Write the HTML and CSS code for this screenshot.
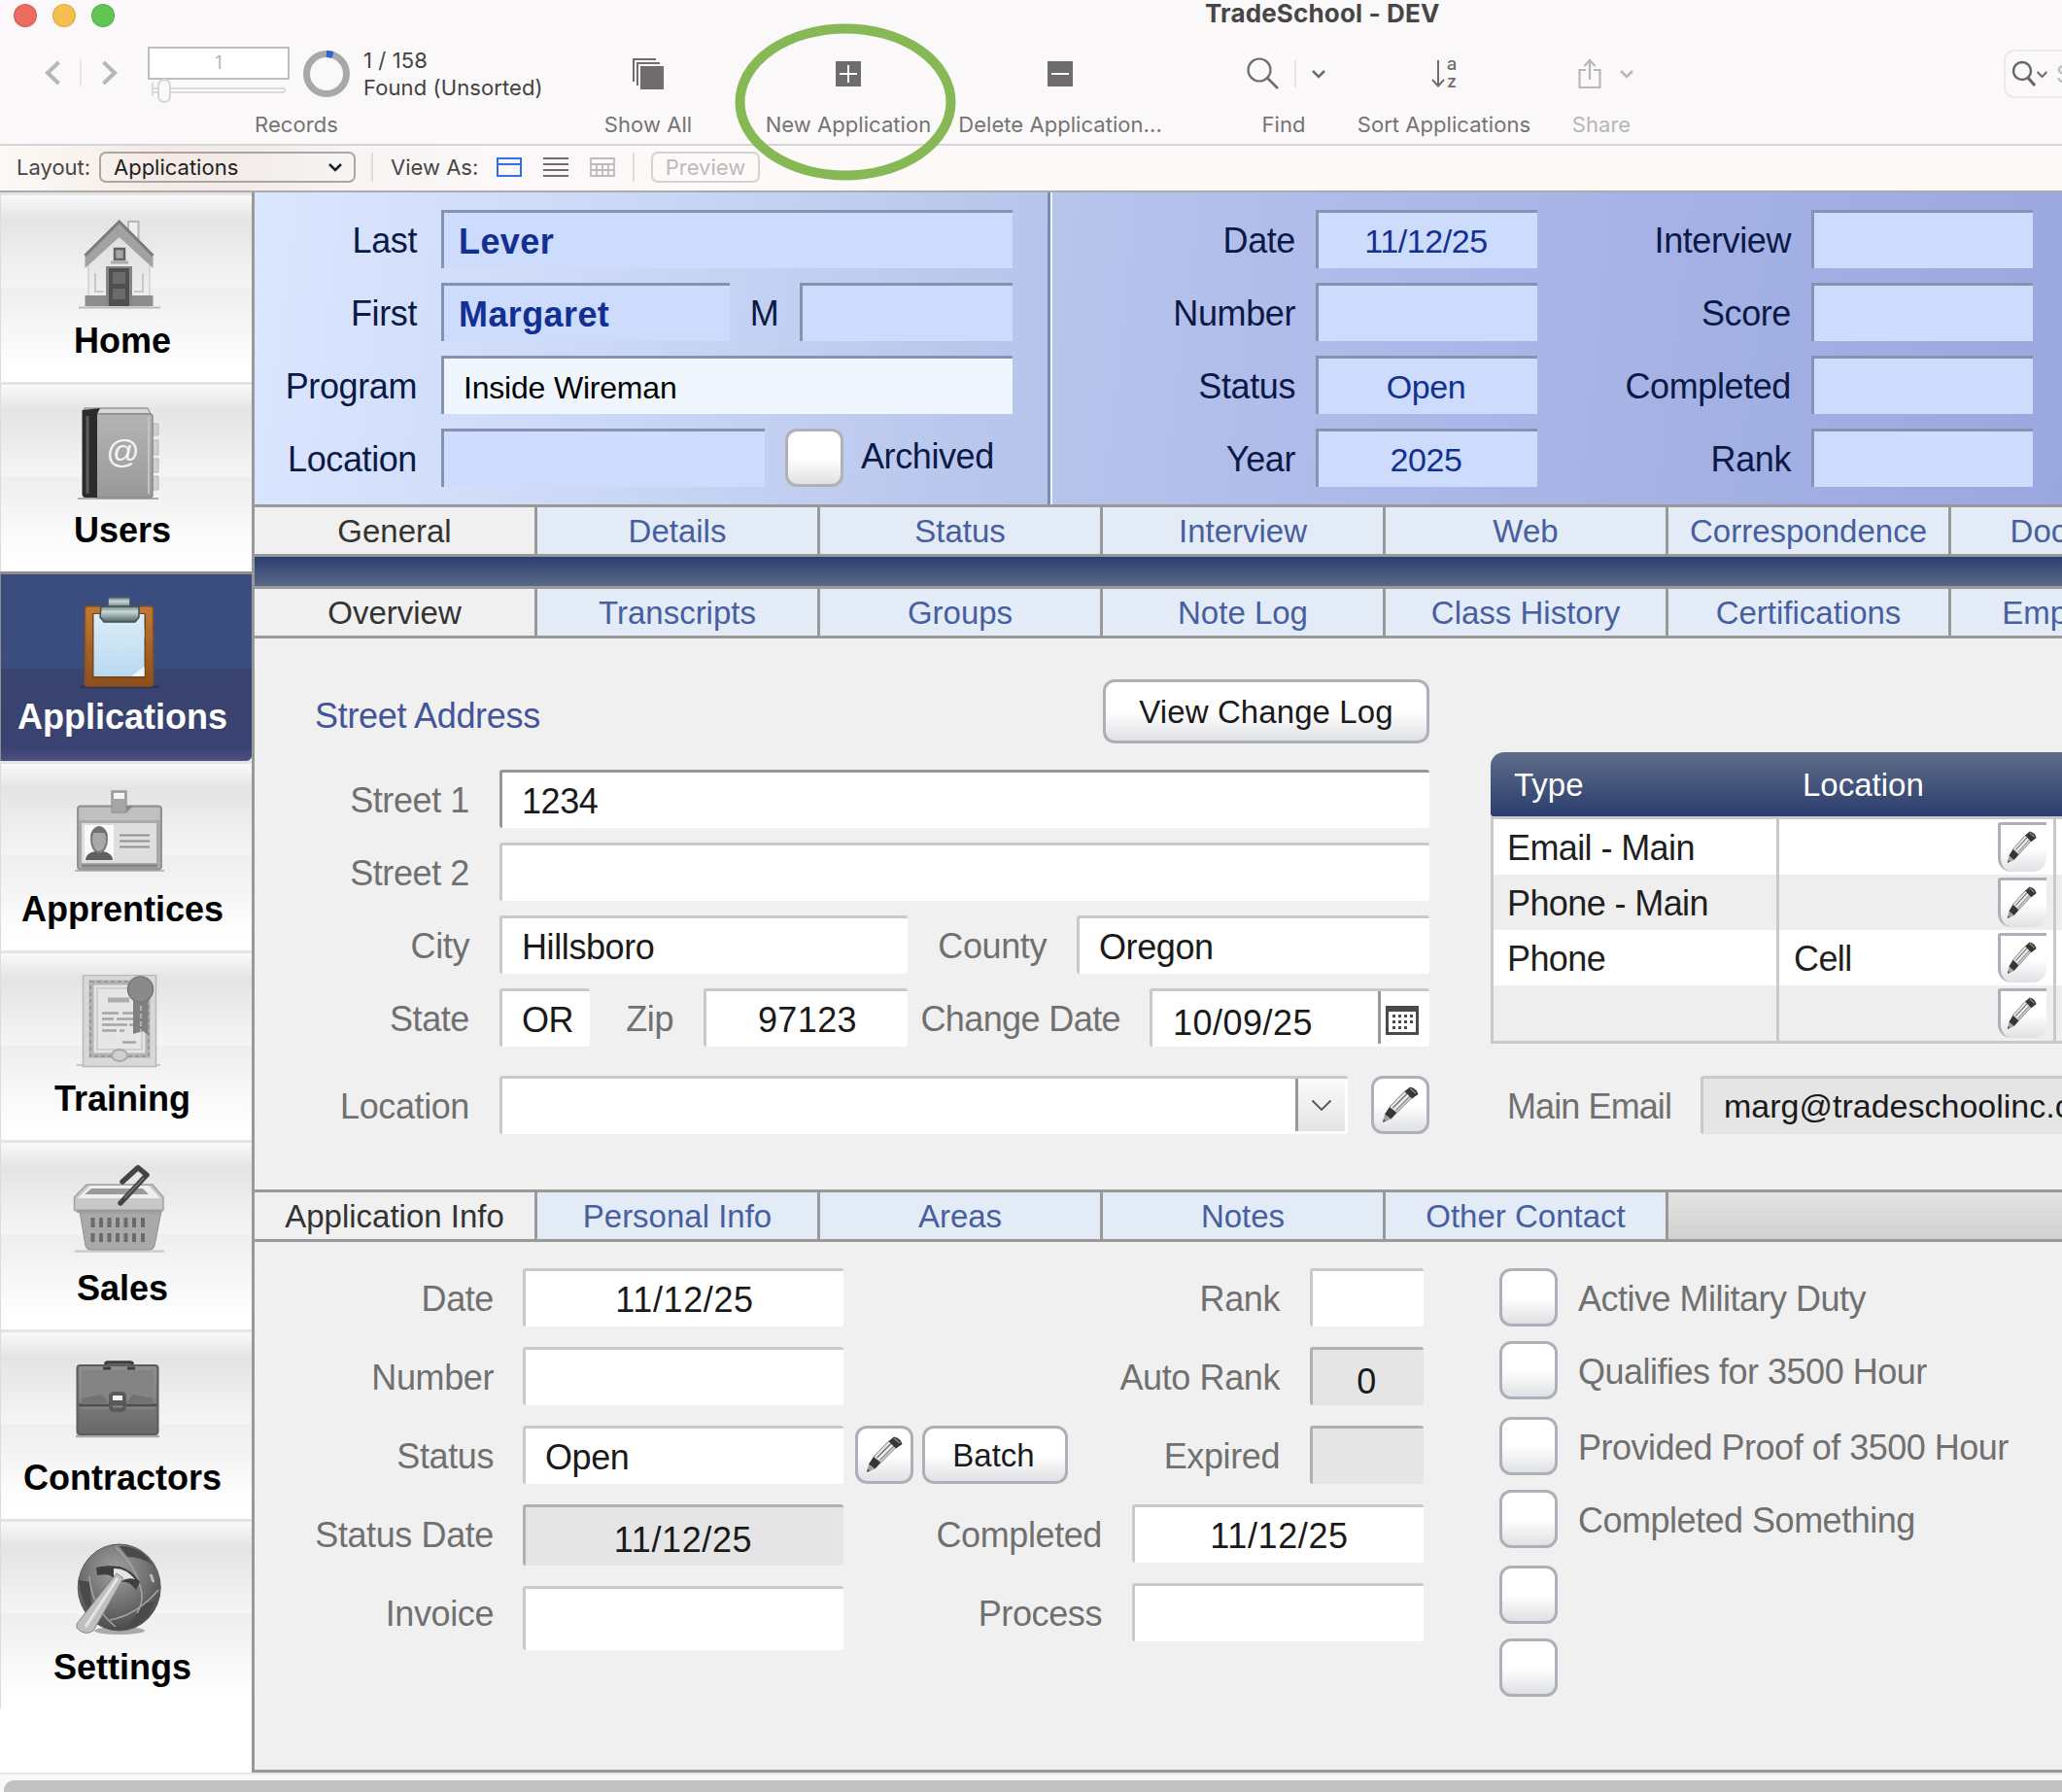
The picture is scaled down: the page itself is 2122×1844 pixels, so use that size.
FILE: index.html
```html
<!DOCTYPE html>
<html lang="en">
<head>
    <meta charset="UTF-8">
    <meta name="viewport" content="width=device-width, initial-scale=1.0">
    <title>TradeSchool - DEV</title>
    <link rel="stylesheet" href="styles.css">
</head>
<body>
    <!-- Shared symbols -->
    <svg class="symbols" width="0" height="0">
        <defs>
            <linearGradient id="gBody" x1="0" y1="0" x2="1" y2="1">
                <stop offset="0" stop-color="#b0b0b0"/><stop offset="0.5" stop-color="#f2f2f2"/><stop offset="1" stop-color="#7d7d7d"/>
            </linearGradient>
            <linearGradient id="gGrey" x1="0" y1="0" x2="0" y2="1">
                <stop offset="0" stop-color="#b4b4b4"/><stop offset="1" stop-color="#999"/>
            </linearGradient>
            <linearGradient id="gLight" x1="0" y1="0" x2="0" y2="1">
                <stop offset="0" stop-color="#dedede"/><stop offset="1" stop-color="#f2f2f2"/>
            </linearGradient>
            <linearGradient id="gCase" x1="0" y1="0" x2="0" y2="1">
                <stop offset="0" stop-color="#8d8d8d"/><stop offset="1" stop-color="#686868"/>
            </linearGradient>
            <linearGradient id="gWood" x1="0" y1="0" x2="0" y2="1">
                <stop offset="0" stop-color="#c07a35"/><stop offset="1" stop-color="#8a4f1c"/>
            </linearGradient>
            <linearGradient id="gPaper" x1="0" y1="0" x2="0" y2="1">
                <stop offset="0" stop-color="#dcedf8"/><stop offset="1" stop-color="#b9d9f1"/>
            </linearGradient>
            <linearGradient id="gClip" x1="0" y1="0" x2="0" y2="1">
                <stop offset="0" stop-color="#6d8484"/><stop offset="0.35" stop-color="#c9d8d6"/><stop offset="1" stop-color="#4d6464"/>
            </linearGradient>
            <radialGradient id="gGlobe" cx="0.45" cy="0.3" r="0.7">
                <stop offset="0" stop-color="#a0a0a0"/><stop offset="0.6" stop-color="#6e6e6e"/><stop offset="1" stop-color="#4a4a4a"/>
            </radialGradient>
        </defs>
        <symbol id="pencil" viewBox="0 0 38 38">
            <path d="M1 37 L3 28.500 L9.500 33.500 Z" fill="#a0a0a0"/>
            <path d="M1 37 L1.800 33.500 L4.500 35.600 Z" fill="#555"/>
            <path d="M3 28.500 L8 21 L15.500 27 L9.500 33.500 Z" fill="#363636"/>
            <path d="M8 21 L23.500 5 L31 11.500 L15.500 27 Z" fill="url(#gBody)" stroke="#7d7d7d" stroke-width="1"/>
            <path d="M11.500 22 L26 7.500" stroke="#6a6a6a" stroke-width="1.200"/>
            <path d="M14.500 24.500 L29 10" stroke="#8a8a8a" stroke-width="1.200"/>
            <path d="M23.500 5 L29 0.500 Q36 2 37.500 8 L31 12.500 Z" fill="#363636"/>
            <path d="M29 2 L35 7" stroke="#8c8c8c" stroke-width="1.500"/>
        </symbol>
        <symbol id="down" viewBox="0 0 16 10">
            <path d="M2 2 L8 8 L14 2" fill="none" stroke="currentColor" stroke-width="2.600"/>
        </symbol>
    </svg>

    <header class="window-bar">
        <div class="title-bar">
            <div class="lights">
                <span class="light red"></span>
                <span class="light yellow"></span>
                <span class="light green"></span>
            </div>
            <div class="window-title">TradeSchool - DEV</div>
        </div>
        <div class="toolbar">
            <div class="tool records">
                <div class="tool-icon records-controls">
                    <svg class="nav-arrow" width="18" height="28" viewBox="0 0 18 28"><path d="M15.500 3 L4 14 L15.500 25" fill="none" stroke="#b8b7b8" stroke-width="4"/></svg>
                    <span class="tool-sep"></span>
                    <svg class="nav-arrow next" width="18" height="28" viewBox="0 0 18 28"><path d="M2.500 3 L14 14 L2.500 25" fill="none" stroke="#b8b7b8" stroke-width="4"/></svg>
                    <div class="record-picker">
                        <div class="record-number">1</div>
                        <svg width="146" height="26" viewBox="0 0 146 26">
                            <path d="M5 4 V18" stroke="#dcdbdc" stroke-width="2"/>
                            <rect x="5" y="10" width="136" height="4" rx="2" fill="none" stroke="#dcdbdc" stroke-width="2"/>
                            <rect x="11" y="1" width="12" height="23" rx="6" fill="#faf8f9" stroke="#d6d5d6" stroke-width="2"/>
                        </svg>
                    </div>
                    <svg class="donut" width="48" height="48" viewBox="0 0 48 48">
                        <circle cx="24" cy="24" r="20.500" fill="none" stroke="#a8a8a8" stroke-width="7"/>
                        <path d="M24 3.500 A20.500 20.500 0 0 1 30.500 4.600" fill="none" stroke="#2c66d2" stroke-width="7"/>
                    </svg>
                    <div class="found">1 / 158<br>Found (Unsorted)</div>
                </div>
                <div class="tool-label">Records</div>
            </div>
            <div class="tool show-all">
                <div class="tool-icon">
                    <svg width="32" height="32" viewBox="0 0 32 32"><path d="M1 24 V1 H24" fill="none" stroke="#6e6c6d" stroke-width="2"/><path d="M5 28 V5 H28" fill="none" stroke="#6e6c6d" stroke-width="2"/><rect x="8" y="8" width="24" height="24" fill="#6e6c6d"/></svg>
                </div>
                <div class="tool-label">Show All</div>
            </div>
            <div class="tool new-app">
                <div class="tool-icon">
                    <svg width="26" height="26" viewBox="0 0 26 26"><rect width="26" height="26" fill="#6e6c6d"/><path d="M13 4 V22 M4 13 H22" stroke="#fff" stroke-width="2"/></svg>
                </div>
                <div class="tool-label">New Application</div>
            </div>
            <div class="tool delete-app">
                <div class="tool-icon">
                    <svg width="26" height="26" viewBox="0 0 26 26"><rect width="26" height="26" fill="#6e6c6d"/><path d="M4 13 H22" stroke="#fff" stroke-width="2"/></svg>
                </div>
                <div class="tool-label">Delete Application...</div>
            </div>
            <div class="tool find">
                <div class="tool-icon">
                    <svg width="34" height="34" viewBox="0 0 34 34"><circle cx="13" cy="13" r="11.500" fill="none" stroke="#6e6c6d" stroke-width="2.200"/><path d="M21 21 L32 32" stroke="#6e6c6d" stroke-width="2.600"/></svg>
                    <span class="tool-sep"></span>
                    <svg class="dark" width="16" height="10"><use href="#down"/></svg>
                </div>
                <div class="tool-label">Find</div>
            </div>
            <div class="tool sort">
                <div class="tool-icon">
                    <svg width="28" height="32" viewBox="0 0 28 32"><path d="M7 2 V28 M1 22 L7 28.500 L13 22" fill="none" stroke="#6e6c6d" stroke-width="2"/><text x="16" y="12" class="sort-letter">a</text><text x="16" y="30" class="sort-letter">z</text></svg>
                </div>
                <div class="tool-label">Sort Applications</div>
            </div>
            <div class="tool share">
                <div class="tool-icon">
                    <svg width="24" height="32" viewBox="0 0 24 32"><path d="M8 12 H1.500 V30 H22.500 V12 H16 M12 22 V2 M6.500 8 L12 2 L17.500 8" fill="none" stroke="#b8b6b7" stroke-width="2.200"/></svg>
                    <svg class="pale" width="16" height="10"><use href="#down"/></svg>
                </div>
                <div class="tool-label">Share</div>
            </div>
            <div class="search">
                <svg width="24" height="28" viewBox="0 0 24 28"><circle cx="10" cy="11" r="9" fill="none" stroke="#666465" stroke-width="2.400"/><path d="M16 18 L23 26" stroke="#666465" stroke-width="3"/></svg>
                <svg class="dark" width="13" height="9"><use href="#down"/></svg>
                <span>Search</span>
            </div>
        </div>
        <svg class="highlight" width="228" height="162" viewBox="0 0 228 162"><ellipse cx="114" cy="81" rx="108.500" ry="75.500" fill="none" stroke="#86b955" stroke-width="10"/></svg>
    </header>

    <div class="layout-bar">
        <span class="layout-label">Layout:</span>
        <div class="layout-select"><span>Applications</span><svg width="16" height="10"><use href="#down"/></svg></div>
        <span class="bar-sep"></span>
        <span class="view-label">View As:</span>
        <div class="view-icons">
            <svg width="26" height="20" viewBox="0 0 26 20"><path d="M1 1 H25 V19 H1 Z M1 7 H25" fill="none" stroke="#2f6fed" stroke-width="2"/></svg>
            <svg width="26" height="20" viewBox="0 0 26 20"><path d="M0 1 H26 M0 7 H26 M0 13 H26 M0 19 H26" stroke="#6e6c6d" stroke-width="2"/></svg>
            <svg width="26" height="20" viewBox="0 0 26 20"><path d="M1 1 H25 V19 H1 Z M1 7 H25 M1 13 H25 M7 7 V19 M13 7 V19 M19 7 V19" fill="none" stroke="#bcbabb" stroke-width="1.800"/></svg>
        </div>
        <span class="bar-sep second"></span>
        <div class="preview">Preview</div>
    </div>

    <div class="workspace">
        <nav class="sidebar">
            <a class="nav-item">
                <svg width="96" height="96" viewBox="0 0 96 96">
                    <path d="M6 93.500 H90" stroke="#bbb" stroke-width="2"/>
                    <path d="M57 5 H67.500 V30 L57 21 Z" fill="#eee" stroke="#b5b5b5" stroke-width="2"/>
                    <path d="M16 46 L47.700 18 L79 46 V92 H16 Z" fill="url(#gLight)" stroke="#c2c2c2"/>
                    <path d="M23 58 V77 H32 M72 58 V77 H63" fill="none" stroke="#c8c8c8" stroke-width="2"/>
                    <path d="M12.500 53 V39 L47.700 4 L82.500 39 V53 L47.700 21 Z" fill="#a2a2a2"/>
                    <path d="M12.500 40 L47.700 5 L82.500 40" fill="none" stroke="#7b7b7b" stroke-width="3"/>
                    <rect x="12.500" y="81" width="70" height="11" fill="#8d8d8d"/>
                    <rect x="43" y="33" width="10" height="11" fill="#a5a5a5" stroke="#626262" stroke-width="2.500"/>
                    <path d="M39 47 H57" stroke="#aaa" stroke-width="3"/>
                    <rect x="34" y="51" width="27" height="41" fill="#858585"/>
                    <rect x="37" y="53" width="21" height="39" fill="#4f4f4f"/>
                    <rect x="41" y="57" width="13" height="12" fill="#6b6b6b"/>
                    <rect x="41" y="74" width="13" height="11" fill="#6b6b6b"/>
                </svg>
                <span>Home</span>
            </a>
            <a class="nav-item">
                <svg width="96" height="96" viewBox="0 0 96 96">
                    <path d="M5 95 H88" stroke="#aaa" stroke-width="2"/>
                    <path d="M82 18 H88 V30 H82 Z M82 35 H88 V50 H82 Z M82 54 H88 V68 H82 Z M82 72 H88 V86 H82 Z" fill="#cfcfcf" stroke="#b5b5b5"/>
                    <path d="M12 2 H77 L80 8 H12 Z" fill="#d8d8d8" stroke="#777"/>
                    <rect x="22" y="8" width="60" height="86" rx="3" fill="url(#gGrey)" stroke="#8a8a8a" stroke-width="1.500"/>
                    <path d="M78 11 V90" stroke="#c4c4c4" stroke-width="2"/>
                    <path d="M9.500 4 L28 2 L25 8 V94 H13 Q9.500 94 9.500 90 Z" fill="#2b2b2b"/>
                    <path d="M15 10 V90" stroke="#5d5d5d" stroke-width="3"/>
                    <text x="51.500" y="58" class="book-at">@</text>
                </svg>
                <span>Users</span>
            </a>
            <a class="nav-item active">
                <svg width="96" height="96" viewBox="0 0 96 96">
                    <path d="M7 94 H89" stroke="#2c3558" stroke-width="2.500"/>
                    <rect x="12.500" y="11" width="70" height="82" rx="3" fill="url(#gWood)" stroke="#8a501f" stroke-width="1.500"/>
                    <rect x="20" y="18" width="55" height="67" fill="#7c4416"/>
                    <rect x="21.500" y="19" width="52" height="64" fill="url(#gPaper)"/>
                    <path d="M73.500 34 L42 59 L73.500 43 Z" fill="#cfe5f5"/>
                    <path d="M73.500 73 L60 83 H73.500 Z" fill="#edf8fd"/>
                    <rect x="36.500" y="2" width="22" height="11" rx="1.500" fill="url(#gClip)" stroke="#4f6869"/>
                    <path d="M29 11 H68 V22 L64 27 H32 L28 22 Z" fill="url(#gClip)" stroke="#3c5051" stroke-width="1.500"/>
                </svg>
                <span>Applications</span>
            </a>
            <a class="nav-item">
                <svg width="96" height="96" viewBox="0 0 96 96">
                    <path d="M2 88 H94" stroke="#bbb" stroke-width="2"/>
                    <rect x="5" y="21.500" width="86" height="65" rx="3" fill="#a9a9a9" stroke="#929292" stroke-width="2"/>
                    <rect x="6.500" y="23" width="83" height="13" fill="#c0c0c0"/>
                    <rect x="9" y="39" width="77" height="41" fill="#dedede"/>
                    <path d="M9 83 H87" stroke="#858585" stroke-width="3"/>
                    <rect x="12" y="41" width="30" height="36" fill="#fafafa"/>
                    <path d="M13 77 Q13 70 23 68 H31 Q41 70 41 77 Z" fill="#606060"/>
                    <ellipse cx="27" cy="56" rx="8" ry="13" fill="#a8a8a8" stroke="#787878" stroke-width="2"/>
                    <path d="M18 53 Q19 43 27 43 Q35 43 36 53 L33 49 H21 Z" fill="#707070"/>
                    <path d="M48 51.500 H79 M48 57.500 H79 M48 63.500 H79" stroke="#8f8f8f" stroke-width="2"/>
                    <path d="M40 6 H55 V28 H40 Z" fill="#a5a5a5" stroke="#999" stroke-width="1.500"/>
                    <rect x="42" y="8" width="11" height="6" fill="#f5f5f5"/>
                    <path d="M55 21 H63 L55 28 Z" fill="#888"/>
                </svg>
                <span>Apprentices</span>
            </a>
            <a class="nav-item">
                <svg width="96" height="96" viewBox="0 0 96 96">
                    <path d="M4 93 H90" stroke="#c5c5c5" stroke-width="2"/>
                    <rect x="10.500" y="0.500" width="75" height="94" fill="#d8d8d8" stroke="#b9b9b9" stroke-width="1.500"/>
                    <rect x="19" y="8" width="58" height="75" fill="#e4e4e4" stroke="#b4b4b4" stroke-width="5"/>
                    <rect x="18" y="7" width="60" height="77" fill="none" stroke="#989898" stroke-width="2" stroke-dasharray="4 3"/>
                    <rect x="25" y="14" width="46" height="63" fill="#e6e6e6" stroke="#cfcfcf" stroke-width="2"/>
                    <path d="M36 26 H58" stroke="#adadad" stroke-width="5"/>
                    <path d="M30 39.500 H47 M51 39.500 H62 M30 45.500 H42 M45 45.500 H63 M30 51.500 H56 M58 51.500 H62 M30 57.500 H45 M48 57.500 H53 M51 69.500 H65" stroke="#a5a5a5" stroke-width="2.500"/>
                    <ellipse cx="48" cy="83" rx="8" ry="6" fill="#d0d0d0" stroke="#a9a9a9" stroke-width="2"/>
                    <path d="M62 27 H77.500 V62 L72 58 L62 61 Z" fill="#808080"/>
                    <path d="M70 32 V58" stroke="#b1b1b1" stroke-width="2" stroke-dasharray="5 3"/>
                    <circle cx="69.500" cy="15" r="13" fill="#8a8a8a" stroke="#757575" stroke-width="1.500"/>
                </svg>
                <span>Training</span>
            </a>
            <a class="nav-item">
                <svg width="96" height="96" viewBox="0 0 96 96">
                    <path d="M2 89.500 H94" stroke="#ccc" stroke-width="2.500"/>
                    <path d="M7 48 H91 L84 84 Q83 88 79 88 H18 Q14 88 13 84 Z" fill="#a9a9a9" stroke="#8d8d8d"/>
                    <path d="M14 21 H82 L93 34 V47 L89 50 H7 L1.500 47 V34 Z" fill="#c8c8c8" stroke="#a0a0a0" stroke-width="1.500"/>
                    <path d="M18 22 H78 L90 35 H5 Z" fill="#f0f0f0"/>
                    <path d="M19 25 H72 L78 31 H12 Z" fill="#9b9b9b"/>
                    <path d="M4 48 H91" stroke="#9b9b9b" stroke-width="3"/>
                    <path d="M20.500 55 V65 M29 55 V65 M37.500 55 V65 M46 55 V65 M54.500 55 V65 M63 55 V65 M72 55 V65 M20.500 71 V80 M29 71 V80 M37.500 71 V80 M46 71 V80 M54.500 71 V80 M63 71 V80 M72 71 V80" stroke="#6b6b6b" stroke-width="4"/>
                    <path d="M51 18 L67 3.500 L76 11 L49 40" fill="none" stroke="#444" stroke-width="5.500" stroke-linejoin="round" stroke-linecap="round"/>
                    <path d="M53 35 L73 14" stroke="#777" stroke-width="1.500"/>
                </svg>
                <span>Sales</span>
            </a>
            <a class="nav-item">
                <svg width="96" height="96" viewBox="0 0 96 96">
                    <path d="M3 85 H89" stroke="#aaa" stroke-width="2.500"/>
                    <path d="M34 16 V10 Q34 9 36 9 H59 Q61 9 61 10 V16" fill="none" stroke="#3c3c3c" stroke-width="3.500"/>
                    <rect x="4.500" y="12" width="83" height="71" rx="3" fill="url(#gCase)" stroke="#5c5c5c" stroke-width="2"/>
                    <path d="M8 16 H84 V48 Q84 51 78 51 H14 Q8 51 8 48 Z" fill="#848484" stroke="#949494"/>
                    <path d="M8 46 L30 42 L37 51 H10 Z M84 46 L62 42 L55 51 H82 Z" fill="#727272"/>
                    <path d="M6 53 H86" stroke="#4e4e4e" stroke-width="2.500"/>
                    <path d="M8 56 H84" stroke="#8a8a8a" stroke-width="1.500"/>
                    <path d="M31 15 H39 M56 15 H64" stroke="#3c3c3c" stroke-width="3"/>
                    <rect x="37" y="39" width="18" height="21" rx="5" fill="#595959"/>
                    <rect x="41" y="43" width="10" height="5" fill="#f2f2f2"/>
                    <path d="M41 54.500 H51" stroke="#8a8a8a" stroke-width="2"/>
                </svg>
                <span>Contractors</span>
            </a>
            <a class="nav-item">
                <svg width="96" height="96" viewBox="0 0 96 96">
                    <ellipse cx="48" cy="90" rx="26" ry="4" fill="#aaa"/>
                    <ellipse cx="47.700" cy="45.500" rx="42.500" ry="44.500" fill="url(#gGlobe)" stroke="#5a5a5a"/>
                    <path d="M48 3 Q70 2 82 22 Q70 14 56 14 Z M84 60 Q74 84 54 88 Q66 76 70 62 Z M6 38 Q8 60 20 74 Q18 52 18 40 Z" fill="#4a4a4a"/>
                    <path d="M44 4 Q66 24 71 52 Q72 62 66 72 M88 48 Q66 74 38 79 M17 34 Q19 66 44 86" fill="none" stroke="#a6a6a6" stroke-width="1.500"/>
                    <path d="M24 25 Q34 22 48 24 Q60 27 69 40 L65 48 Q58 38 50 40 L43 38 Q40 30 25 33 Z" fill="#3f3f3f"/>
                    <path d="M42 26 Q54 25 64 37 Q56 35 50 39 L42 36 Z" fill="#e5e5e5"/>
                    <path d="M45 31 L52 36 L21 90 Q12 96 4 87 L4 83 Z" fill="#c0c0c0" stroke="#858585" stroke-width="1"/>
                    <path d="M46 36 L13 86" stroke="#e5e5e5" stroke-width="3"/>
                    <path d="M80 32 L83 40" stroke="#bbb" stroke-width="3"/>
                </svg>
                <span>Settings</span>
            </a>
        </nav>

        <main class="main">
            <!-- Record header -->
            <section class="record-head">
                <div class="person">
                    <div class="row">
                        <label>Last</label>
                        <div class="field name">Lever</div>
                    </div>
                    <div class="row">
                        <label>First</label>
                        <div class="field name first-name">Margaret</div>
                        <label class="middle">M</label>
                        <div class="field"></div>
                    </div>
                    <div class="row">
                        <label>Program</label>
                        <div class="field program">Inside Wireman</div>
                    </div>
                    <div class="row">
                        <label>Location</label>
                        <div class="field location"></div>
                        <span class="check"></span>
                        <label class="archived">Archived</label>
                    </div>
                </div>
                <div class="summary">
                    <div class="row"><label>Date</label><div class="field">11/12/25</div><label class="wide">Interview</label><div class="field"></div></div>
                    <div class="row"><label>Number</label><div class="field"></div><label class="wide">Score</label><div class="field"></div></div>
                    <div class="row"><label>Status</label><div class="field">Open</div><label class="wide">Completed</label><div class="field"></div></div>
                    <div class="row"><label>Year</label><div class="field">2025</div><label class="wide">Rank</label><div class="field"></div></div>
                </div>
            </section>

            <div class="tabs">
                <a class="tab current">General</a>
                <a class="tab">Details</a>
                <a class="tab">Status</a>
                <a class="tab">Interview</a>
                <a class="tab">Web</a>
                <a class="tab">Correspondence</a>
                <a class="tab">Documents</a>
            </div>
            <div class="navy-bar"></div>
            <div class="tabs">
                <a class="tab current">Overview</a>
                <a class="tab">Transcripts</a>
                <a class="tab">Groups</a>
                <a class="tab">Note Log</a>
                <a class="tab">Class History</a>
                <a class="tab">Certifications</a>
                <a class="tab">Employment</a>
            </div>

            <!-- Overview -->
            <section class="overview">
                <div class="address">
                    <div class="address-head">
                        <h2>Street Address</h2>
                        <button class="button log-button">View Change Log</button>
                    </div>
                    <div class="row"><label>Street 1</label><div class="field strong">1234</div></div>
                    <div class="row"><label>Street 2</label><div class="field"></div></div>
                    <div class="row">
                        <label>City</label><div class="field city">Hillsboro</div>
                        <label class="county-label">County</label><div class="field">Oregon</div>
                    </div>
                    <div class="row">
                        <label>State</label><div class="field state">OR</div>
                        <label class="zip-label">Zip</label><div class="field zip">97123</div>
                        <label class="change-label">Change Date</label>
                        <div class="field date">
                            <span>10/09/25</span>
                            <div class="date-button">
                                <svg width="34" height="30" viewBox="0 0 34 30"><rect x="1.500" y="1.500" width="31" height="27" fill="#fff" stroke="#4a4a4a" stroke-width="3"/><rect width="34" height="6" fill="#4a4a4a"/><path d="M7 10.500 H29 M7 16.500 H29 M7 22.500 H24" stroke="#4a4a4a" stroke-width="3" stroke-dasharray="3 3"/></svg>
                            </div>
                        </div>
                    </div>
                    <div class="row location-row">
                        <label>Location</label>
                        <div class="field location">
                            <div class="drop-button"><svg width="22" height="13" viewBox="0 0 22 13"><path d="M1.500 1.500 L11 11 L20.500 1.500" fill="none" stroke="#555" stroke-width="1.800"/></svg></div>
                        </div>
                        <button class="button pencil-button"><svg width="38" height="38"><use href="#pencil"/></svg></button>
                    </div>
                </div>

                <div class="contacts">
                    <div class="contacts-head"><span>Type</span><span>Location</span></div>
                    <div class="contacts-body">
                        <div class="contact-row"><div class="type">Email - Main</div><div class="place"><span></span><i class="edit"><svg width="31" height="34" viewBox="0 0 38 38" preserveAspectRatio="none"><use href="#pencil" width="38" height="38"/></svg></i></div><div class="rest"></div></div>
                        <div class="contact-row"><div class="type">Phone - Main</div><div class="place"><span></span><i class="edit"><svg width="31" height="34" viewBox="0 0 38 38" preserveAspectRatio="none"><use href="#pencil" width="38" height="38"/></svg></i></div><div class="rest"></div></div>
                        <div class="contact-row"><div class="type">Phone</div><div class="place"><span>Cell</span><i class="edit"><svg width="31" height="34" viewBox="0 0 38 38" preserveAspectRatio="none"><use href="#pencil" width="38" height="38"/></svg></i></div><div class="rest"></div></div>
                        <div class="contact-row"><div class="type"></div><div class="place"><span></span><i class="edit"><svg width="31" height="34" viewBox="0 0 38 38" preserveAspectRatio="none"><use href="#pencil" width="38" height="38"/></svg></i></div><div class="rest"></div></div>
                    </div>
                    <div class="row email-row">
                        <label>Main Email</label>
                        <div class="field email">marg@tradeschoolinc.com</div>
                    </div>
                </div>
            </section>

            <div class="tabs lower">
                <a class="tab current">Application Info</a>
                <a class="tab">Personal Info</a>
                <a class="tab">Areas</a>
                <a class="tab">Notes</a>
                <a class="tab">Other Contact</a>
            </div>

            <!-- Application info -->
            <section class="info">
                <div class="info-col left">
                    <div class="row"><label>Date</label><div class="field center">11/12/25</div></div>
                    <div class="row"><label>Number</label><div class="field"></div></div>
                    <div class="row">
                        <label>Status</label><div class="field">Open</div>
                        <button class="button pencil-button"><svg width="38" height="38"><use href="#pencil"/></svg></button>
                        <button class="button batch">Batch</button>
                    </div>
                    <div class="row"><label>Status Date</label><div class="field center locked tall">11/12/25</div></div>
                    <div class="row"><label>Invoice</label><div class="field invoice"></div></div>
                </div>
                <div class="info-col middle-col">
                    <div class="row"><label>Rank</label><div class="field small"></div></div>
                    <div class="row"><label>Auto Rank</label><div class="field small center locked">0</div></div>
                    <div class="row"><label>Expired</label><div class="field small locked"></div></div>
                    <div class="row"><label>Completed</label><div class="field center">11/12/25</div></div>
                    <div class="row"><label>Process</label><div class="field"></div></div>
                </div>
                <div class="checks">
                    <div class="check-row"><span class="check"></span><label>Active Military Duty</label></div>
                    <div class="check-row"><span class="check"></span><label>Qualifies for 3500 Hour</label></div>
                    <div class="check-row"><span class="check"></span><label>Provided Proof of 3500 Hour</label></div>
                    <div class="check-row"><span class="check"></span><label>Completed Something</label></div>
                    <div class="check-row"><span class="check"></span></div>
                    <div class="check-row"><span class="check"></span></div>
                </div>
            </section>
        </main>
    </div>

    <div class="scroll-track"><div class="scroll-thumb"></div></div>
</body>
</html>
```

FILE: styles.css
```css
:root {
    --line: #999999;
    --field-line: #c9c9c9;
    --panel: #f0f0f0;
    --label: #707070;
    --tab-blue: #475f9f;
}

* {
    margin: 0;
    padding: 0;
    box-sizing: border-box;
}

html {
    overflow: hidden;
}

body {
    width: 100%;
    height: 1844px;
    overflow: hidden;
    background: white;
    font-family: 'Liberation Sans', Arial, sans-serif;
    display: flex;
    flex-direction: column;
}

svg {
    display: block;
    flex: none;
}

.symbols {
    position: absolute;
}

/* Window bar and toolbar */
.window-bar {
    position: relative;
    height: 150px;
    background: #faf8f9;
    border-bottom: 2px solid #d6d4d5;
    font-family: Inter, sans-serif;
}

.title-bar {
    height: 34px;
    display: flex;
}

.lights {
    display: flex;
    gap: 16px;
    padding: 4px 0 0 14px;
    width: 1240px;
}

.light {
    width: 24px;
    height: 24px;
    border-radius: 50%;
    border: 1px solid rgba(0, 0, 0, 0.12);
}

.light.red { background: #ec6a5e; }
.light.yellow { background: #f4bf4f; }
.light.green { background: #61c554; }

.window-title {
    font-size: 26px;
    font-weight: 700;
    line-height: 28px;
    letter-spacing: 0.15px;
    color: #474647;
}

.toolbar {
    display: flex;
    height: 114px;
}

.tool {
    flex: none;
    display: flex;
    flex-direction: column;
    align-items: center;
}

.tool-icon {
    height: 82px;
    padding-top: 1px;
    display: flex;
    align-items: center;
    justify-content: center;
}

.tool-label {
    font-size: 22px;
    line-height: 24px;
    letter-spacing: 0.05px;
    color: #757374;
    white-space: nowrap;
}

.tool-sep {
    flex: none;
    width: 2px;
    height: 28px;
    background: #e7e5e6;
}

.records { width: 610px; }
.show-all { width: 114px; }
.new-app { width: 188px; margin-left: 55px; }
.delete-app { width: 220px; margin-left: 14px; }
.find { width: 84px; margin-left: 78px; }
.sort { width: 190px; margin-left: 28px; }
.share { width: 70px; margin-left: 32px; color: #b8b6b7; }
.share .tool-label { color: #b8b6b7; }
.share .tool-icon { align-self: flex-end; gap: 18px; width: 60px; }
.find .tool-icon { width: 84px; gap: 15px; padding-left: 6px; }
.sort .tool-icon { padding-left: 2px; }
.dark { color: #6e6c6d; }
.pale { color: #b8b6b7; }

.records-controls {
    width: 610px;
    justify-content: flex-start;
    padding-top: 0;
    padding-left: 45px;
}

.nav-arrow + .tool-sep { margin-left: 19px; }
.nav-arrow.next { margin-left: 20px; }

.record-picker {
    margin: 5px 0 0 30px;
    width: 146px;
}

.record-number {
    height: 34px;
    border: 2px solid #bfbebf;
    background: white;
    color: #b5b4b5;
    font-size: 18px;
    line-height: 30px;
    text-align: center;
}

.record-picker svg {
    margin-top: -1px;
}

.donut {
    margin: 2px 14px 0 14px;
}

.found {
    font-size: 22px;
    line-height: 28px;
    letter-spacing: 0.1px;
    color: #444344;
    white-space: nowrap;
    margin-top: 2px;
}

.sort-letter {
    font-family: Inter, sans-serif;
    font-size: 18px;
    font-weight: 500;
    fill: #6e6c6d;
}

.search {
    flex: none;
    width: 300px;
    height: 50px;
    margin: 17px 0 0 379px;
    border: 2px solid #ebe9ea;
    border-radius: 11px;
    display: flex;
    align-items: center;
    padding-left: 7px;
    font-size: 24px;
    color: #bcbabb;
}

.search span {
    margin-left: 8px;
}

.highlight {
    position: absolute;
    left: 756px;
    top: 24px;
    z-index: 2;
}

/* Layout bar */
.layout-bar {
    height: 48px;
    border-bottom: 2px solid #ababab;
    background: linear-gradient(90deg, #fcf9f6 0, #f9f2ed 90px, #f4e9e5 170px, #f3ecea 260px, #f6f5f4 360px, #fbf8f7 500px, #fdf9f8 700px);
    display: flex;
    align-items: center;
    padding: 0 0 2px 17px;
    font-family: Inter, sans-serif;
    font-size: 22px;
    color: #474647;
}

.layout-label { width: 85px; }

.layout-select {
    width: 264px;
    height: 32px;
    border: 2px solid #a9a6a6;
    border-radius: 7px;
    display: flex;
    align-items: center;
    justify-content: space-between;
    padding: 0 11px 0 13px;
    color: #222;
}

.bar-sep {
    width: 2px;
    height: 30px;
    background: #dfdcdc;
    margin-left: 16px;
}

.view-label {
    width: 108px;
    margin-left: 18px;
}

.view-icons {
    display: flex;
    gap: 22px;
    margin-left: 1px;
}

.bar-sep.second { margin-left: 18px; }

.preview {
    width: 112px;
    height: 32px;
    margin-left: 17px;
    border: 2px solid #d5d2d2;
    border-radius: 7px;
    color: #bcbaba;
    line-height: 28px;
    text-align: center;
}

/* Sidebar */
.workspace {
    display: flex;
    height: 1626px;
}

.sidebar {
    flex: none;
    width: 259px;
}

.nav-item {
    height: 195px;
    display: flex;
    flex-direction: column;
    align-items: center;
    border-top: 3px solid #e4e4e4;
    border-left: 1px solid #dcdcdc;
    background: linear-gradient(#f9f9f9 0, #e4e4e4 26px, #f5f5f5 94px, #eeeeee 95px, #ffffff 180px);
    color: black;
    font-size: 36px;
    font-weight: bold;
}

.nav-item svg {
    margin: 22px 0 0 74px;
    align-self: flex-start;
}

.nav-item span {
    margin-left: -8px;
    line-height: 40px;
    margin-top: 12px;
}

.nav-item.active {
    border-color: #8f8f8f;
    background: linear-gradient(#3b4c7f 0, #3b4e80 96px, #3a4470 97px, #394270 178px, #4c5083 192px);
    border-radius: 0 0 5px 0;
    color: white;
}

.nav-item.active span { margin-top: 9px; }

.book-at {
    font-family: 'Liberation Sans', sans-serif;
    font-size: 34px;
    font-weight: normal;
    text-anchor: middle;
    fill: #f4f4f4;
}

/* Shared form parts */
.main {
    flex: 1;
    min-width: 0;
    border-left: 3px solid var(--line);
    border-bottom: 3px solid var(--line);
    background: var(--panel);
    overflow: hidden;
}

.row {
    display: flex;
    height: 60px;
}

label {
    flex: none;
    height: 60px;
    padding-top: 3px;
    line-height: 57px;
    font-size: 36px;
    letter-spacing: -0.4px;
    text-align: right;
    white-space: nowrap;
    color: var(--label);
}

.field {
    flex: 1;
    height: 60px;
    padding: 3px 20px 0;
    border-top: 3px solid var(--field-line);
    border-left: 3px solid var(--field-line);
    border-radius: 3px;
    background: white;
    color: #1a1a1a;
    font-size: 36px;
    line-height: 54px;
    letter-spacing: -0.4px;
    white-space: nowrap;
}

.center {
    padding: 3px 0 0;
    text-align: center;
    letter-spacing: 0.6px;
}

.check,
.button {
    flex: none;
    height: 60px;
    border: 3px solid #adb0b8;
    border-radius: 12px;
    background: linear-gradient(#ffffff 50%, #e0e1e4 100%);
}

.check {
    width: 60px;
}

.button {
    font-family: inherit;
    font-size: 33px;
    color: #1a1a1a;
}

.pencil-button {
    width: 60px;
    display: flex;
    align-items: center;
    justify-content: center;
}

/* Record header */
.record-head {
    height: 324px;
    display: flex;
    border-bottom: 3px solid var(--line);
    background: linear-gradient(97deg, #dbe6ff 0%, #d0dcf8 15%, #b8c5ec 42%, #a9b5e7 70%, #9aa8df 100%);
}

.record-head .row {
    margin-bottom: 15px;
}

.record-head label {
    color: #0b1947;
}

.record-head .field {
    border-color: #8593b3;
    border-radius: 0;
    background: #cddbfd;
    color: #123092;
}

.person {
    width: 821px;
    flex: none;
    padding: 18px 36px 0 0;
    border-right: 2px solid #f0f3fd;
    box-shadow: inset -3px 0 0 #7d89b8;
}

.person label {
    width: 167px;
    margin-right: 25px;
}

.person .row { width: 780px; }

.record-head .field.name {
    font-weight: bold;
    padding: 3px 0 0 15px;
    letter-spacing: 0.4px;
}

.person .first-name {
    flex: none;
    width: 297px;
}

.person .middle {
    width: 71px;
    margin: 0 1px 0 0;
    text-align: center;
}

.record-head .program {
    background: #eff6fe;
    color: #000;
    font-size: 32px;
    letter-spacing: -0.2px;
    padding: 3px 0 0 20px;
}

.person .location {
    flex: none;
    width: 333px;
    margin-right: 21px;
}

.person .archived {
    width: auto;
    margin: -3px 0 0 18px;
}

.person .check {
    border-color: #b0b2b6;
}

.summary {
    padding-top: 18px;
}

.summary label {
    width: 250px;
    margin-right: 21px;
}

.summary .wide { width: 261px; }

.summary .field {
    flex: none;
    width: 228px;
    padding: 2px 4px 0 0;
    font-size: 34px;
    text-align: center;
}

/* Tabs */
.tabs {
    display: flex;
    height: 51px;
    border-bottom: 3px solid var(--line);
    background: linear-gradient(#e3e3e3, #d1d1d1);
}

.tab {
    flex: none;
    width: 291px;
    border-right: 3px solid var(--line);
    background: #e3ebf7;
    color: var(--tab-blue);
    font-size: 33px;
    line-height: 47px;
    padding-top: 1px;
    text-align: center;
}

.tab.current {
    background: var(--panel);
    color: #333;
}

.tabs.lower {
    height: 54px;
    border-top: 3px solid var(--line);
}

.navy-bar {
    height: 33px;
    border-bottom: 3px solid var(--line);
    background: linear-gradient(#2b4070, #5b6988);
}

/* Overview panel */
.overview {
    height: 567px;
    display: flex;
    padding-top: 42px;
}

.address {
    flex: none;
    width: 1209px;
}

.address-head {
    display: flex;
    justify-content: space-between;
    height: 93px;
    padding-left: 62px;
}

.address-head h2 {
    font-size: 36px;
    font-weight: normal;
    letter-spacing: -0.3px;
    line-height: 76px;
    color: #43559a;
}

.log-button {
    width: 336px;
    height: 66px;
    padding-top: 1px;
    letter-spacing: 0.1px;
}

.address .row {
    margin-bottom: 15px;
}

.address label {
    width: 221px;
    margin-right: 31px;
}

.field.strong { border-color: #979797; }
.address .city { flex: none; width: 420px; }
.address .county-label { width: 143px; }
.address .state { flex: none; width: 93px; }
.address .zip-label { width: 86px; }

.address .zip {
    flex: none;
    width: 210px;
    padding: 3px 0 0 1px;
    text-align: center;
    letter-spacing: 0.4px;
}

.address .change-label {
    width: 219px;
    margin-right: 30px;
    letter-spacing: -0.6px;
}

.address .date {
    display: flex;
    justify-content: space-between;
    padding-right: 0;
    padding-left: 21px;
    letter-spacing: 0.5px;
}

.date span {
    padding-top: 3px;
}

.date-button {
    width: 53px;
    height: 54px;
    margin-top: -3px;
    border-left: 3px solid var(--line);
    padding: 15px 0 0 5px;
}

.address .location-row {
    margin-top: 30px;
}

.address .location {
    padding: 0 3px 3px 0;
    margin-right: 24px;
    display: flex;
    justify-content: flex-end;
}

.drop-button {
    width: 51px;
    height: 54px;
    border-left: 3px solid var(--line);
    background: linear-gradient(#fbfbfb, #e3e3e3);
    display: flex;
    align-items: center;
    justify-content: center;
}

/* Contact list */
.contacts {
    width: 700px;
    flex: none;
    margin: 75px 0 0 63px;
}

.contacts-head {
    height: 66px;
    border-radius: 14px 0 0 3px;
    background: linear-gradient(#5f6d89, #2a3d6d);
    color: white;
    font-size: 33px;
    line-height: 67px;
    display: flex;
    padding-left: 24px;
}

.contacts-head span:first-child {
    width: 297px;
}

.contacts-body {
    border: 3px solid var(--field-line);
}

.contact-row {
    display: flex;
    height: 57px;
    background: white;
    font-size: 36px;
    line-height: 60px;
    letter-spacing: -0.6px;
    color: #1f1f1f;
}

.contact-row:nth-child(even) {
    background: #eeeeee;
}

.contact-row .type {
    width: 294px;
    padding-left: 14px;
    border-right: 3px solid var(--field-line);
}

.contact-row .place {
    width: 285px;
    padding: 0 7px 0 15px;
    border-right: 3px solid var(--field-line);
    display: flex;
    justify-content: space-between;
}

.edit {
    width: 50px;
    height: 51px;
    margin-top: 3px;
    border-top: 3px solid #adb0b8;
    border-left: 3px solid #adb0b8;
    border-radius: 3px 0 14px 14px;
    background: linear-gradient(#ffffff 50%, #dfe1e4 100%);
    padding: 6px 0 0 6px;
}

.email-row {
    margin: 33px 0 0 17px;
}

.email-row label {
    width: 199px;
    text-align: left;
    letter-spacing: -0.9px;
}

.field.email {
    background: #e5e5e5;
    font-size: 34px;
    padding: 1px 0 0 21px;
    letter-spacing: 0;
}

/* Application info panel */
.info {
    display: flex;
    padding-top: 27px;
}

.info-col .row {
    height: 81px;
}

.info-col.left {
    flex: none;
    width: 840px;
}

.left label {
    width: 246px;
    margin-right: 30px;
}

.left .field {
    flex: none;
    width: 330px;
}

.field.locked {
    background: #e5e5e5;
    border-color: #b0b0b0;
}

.left .tall {
    height: 63px;
    padding: 7px 3px 0 0;
}

.left .invoice {
    height: 66px;
    margin-top: 3px;
}

.left .pencil-button {
    margin: 0 9px 0 12px;
}

.batch {
    width: 150px;
    padding-right: 3px;
    padding-top: 1px;
}

.middle-col {
    flex: none;
    width: 363px;
    display: flex;
    flex-direction: column;
    align-items: flex-end;
}

.middle-col label {
    margin-right: 31px;
}

.middle-col .field {
    flex: none;
    width: 300px;
}

.middle-col .small {
    width: 117px;
}

.middle-col .small.center {
    padding: 6px 3px 0 0;
}

.checks {
    margin-left: 78px;
}

.check-row {
    display: flex;
    margin-bottom: 15px;
}

.check-row:nth-child(even) {
    margin-bottom: 18px;
}

.check-row label {
    margin-left: 21px;
    letter-spacing: -0.5px;
}

/* Bottom scroll bar */
.scroll-track {
    height: 20px;
    border-top: 2px solid #e7e7e7;
    background: #f9f9f9;
    padding: 6px 0 0 4px;
}

.scroll-thumb {
    height: 24px;
    border-radius: 10px 0 0 10px;
    background: #c2c2c2;
}
```
